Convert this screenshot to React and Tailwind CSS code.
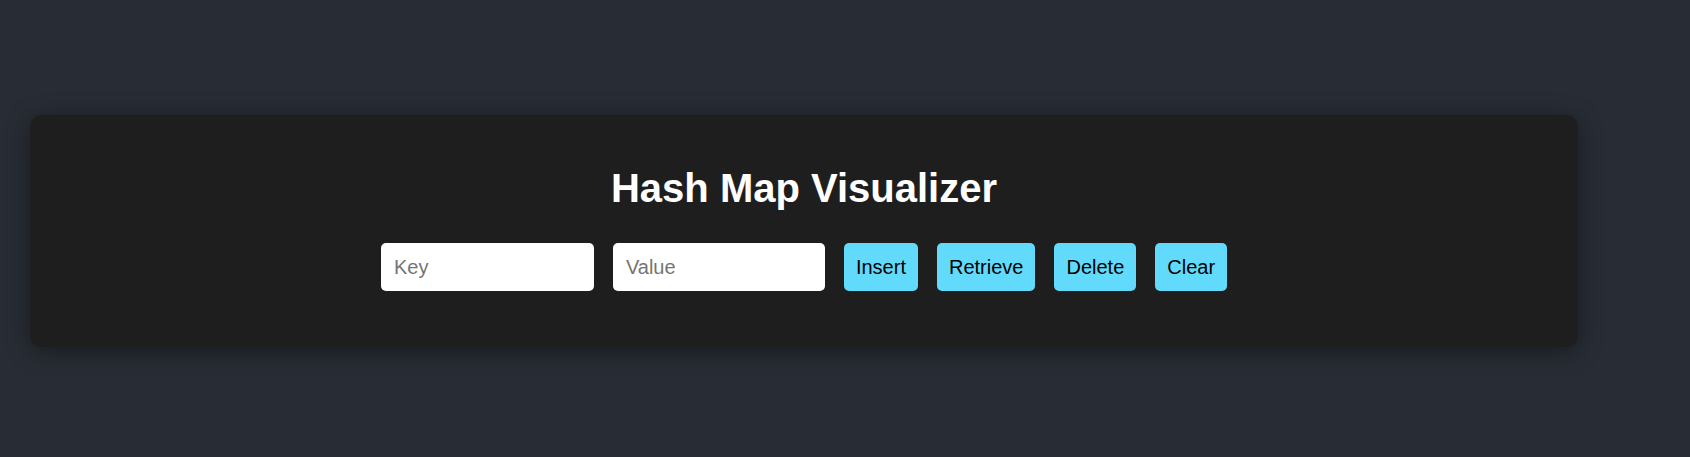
import React, { useState } from 'react';

const App = () => {
  const [key, setKey] = useState('');
  const [value, setValue] = useState('');

  const buttons = ['Insert', 'Retrieve', 'Delete', 'Clear'];

  return (
    <div
      className="min-h-screen h-[457px] bg-[#282c34] pt-[115px]"
      style={{ fontFamily: '"Liberation Sans", Arial, sans-serif' }}
    >
      {/* Card */}
      <div className="ml-[30px] w-[1548px] h-[232px] bg-[#1e1e1e] rounded-xl shadow-[0_4px_24px_rgba(0,0,0,0.4)] flex flex-col items-center pt-[50px]">
        <h1 className="text-[40px] leading-[46px] font-bold text-white">Hash Map Visualizer</h1>

        <div className="mt-[32px] flex items-center gap-[19px]">
          <input
            value={key}
            onChange={(e) => setKey(e.target.value)}
            placeholder="Key"
            className="w-[213px] h-[48px] bg-white rounded-[5px] px-[13px] text-[20px] text-black placeholder:text-[#757575] outline-none"
          />
          <input
            value={value}
            onChange={(e) => setValue(e.target.value)}
            placeholder="Value"
            className="w-[212px] h-[48px] bg-white rounded-[5px] px-[13px] text-[20px] text-black placeholder:text-[#757575] outline-none"
          />
          {buttons.map((b) => (
            <button
              key={b}
              className="h-[48px] px-3 bg-[#61dafb] rounded-[5px] text-[20px] text-black"
            >
              {b}
            </button>
          ))}
        </div>
      </div>
    </div>
  );
};

export default App;
